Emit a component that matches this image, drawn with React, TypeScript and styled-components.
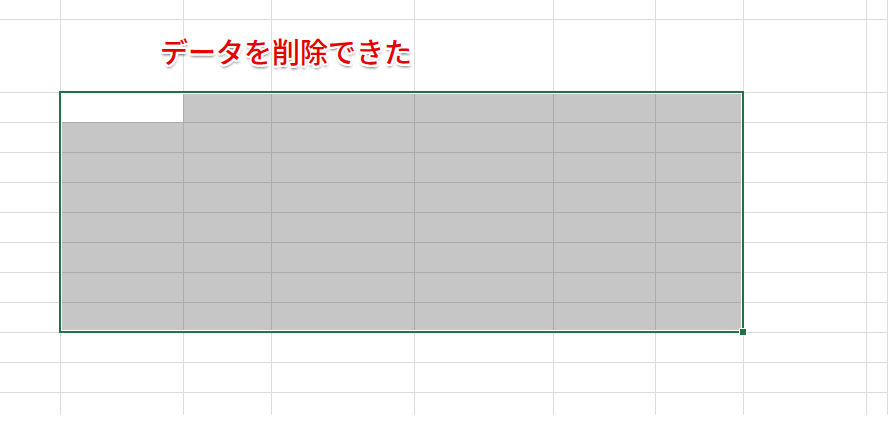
import React from "react";
import styled, { createGlobalStyle } from "styled-components";

const Global = createGlobalStyle`
  html, body { margin: 0; padding: 0; background: #ffffff; }
  body { font-family: "Noto Sans CJK JP", "Noto Sans", sans-serif; overflow: hidden; }
`;

const COLS = [61, 123, 88, 143, 139, 102, 88, 123, 21];
const ROWS = [20, 73, 30, 30, 30, 30, 30, 30, 30, 30, 30, 30, 22];

const Sheet = styled.div`
  position: relative;
  width: 888px;
  display: grid;
  grid-template-columns: ${COLS.map((c) => `${c}px`).join(" ")};
  grid-template-rows: ${ROWS.map((r) => `${r}px`).join(" ")};
  background: #ffffff;
`;

const Cell = styled.div<{ $sel?: boolean; $active?: boolean; $last?: boolean }>`
  box-sizing: border-box;
  border-right: 1px solid ${(p) => (p.$sel ? "#ababab" : "#dcdcdc")};
  border-bottom: ${(p) =>
    p.$last ? "none" : `1px solid ${p.$sel ? "#ababab" : "#dcdcdc"}`};
  background: ${(p) => (p.$sel && !p.$active ? "#c6c6c6" : "#ffffff")};
`;

const Selection = styled.div`
  position: absolute;
  left: 59px;
  top: 91px;
  width: 685px;
  height: 242px;
  box-sizing: border-box;
  border: 2px solid #217346;
  box-shadow: inset 0 0 0 1px #ffffff;
  pointer-events: none;
`;

const FillHandle = styled.div`
  position: absolute;
  left: 739px;
  top: 328px;
  width: 6px;
  height: 6px;
  background: #217346;
  border: 1px solid #ffffff;
`;

const Note = styled.div`
  position: absolute;
  left: 160px;
  top: 33px;
  font-family: "Noto Sans CJK JP", "Noto Sans", sans-serif;
  font-size: 28px;
  font-weight: 500;
  line-height: 36px;
  letter-spacing: 0;
  color: #e20000;
  white-space: nowrap;
  text-shadow:
    2px 0 0 #fff, -2px 0 0 #fff, 0 2px 0 #fff, 0 -2px 0 #fff,
    1.5px 1.5px 0 #fff, -1.5px 1.5px 0 #fff, 1.5px -1.5px 0 #fff, -1.5px -1.5px 0 #fff,
    2px 1px 0 #fff, -2px 1px 0 #fff, 1px 2px 0 #fff, -1px 2px 0 #fff,
    0 3px 3px rgba(0, 0, 0, 0.45), 1px 3px 3px rgba(0, 0, 0, 0.3);
`;

export default function App() {
  const cells: React.ReactNode[] = [];
  ROWS.forEach((_, r) => {
    COLS.forEach((_, c) => {
      const sel = r >= 2 && r <= 9 && c >= 1 && c <= 6;
      const active = r === 2 && c === 1;
      cells.push(
        <Cell
          key={`${r}-${c}`}
          $sel={sel}
          $active={active}
          $last={r === ROWS.length - 1}
        />
      );
    });
  });
  return (
    <>
      <Global />
      <Sheet>
        {cells}
        <Selection />
        <FillHandle />
        <Note>データを削除できた</Note>
      </Sheet>
    </>
  );
}
